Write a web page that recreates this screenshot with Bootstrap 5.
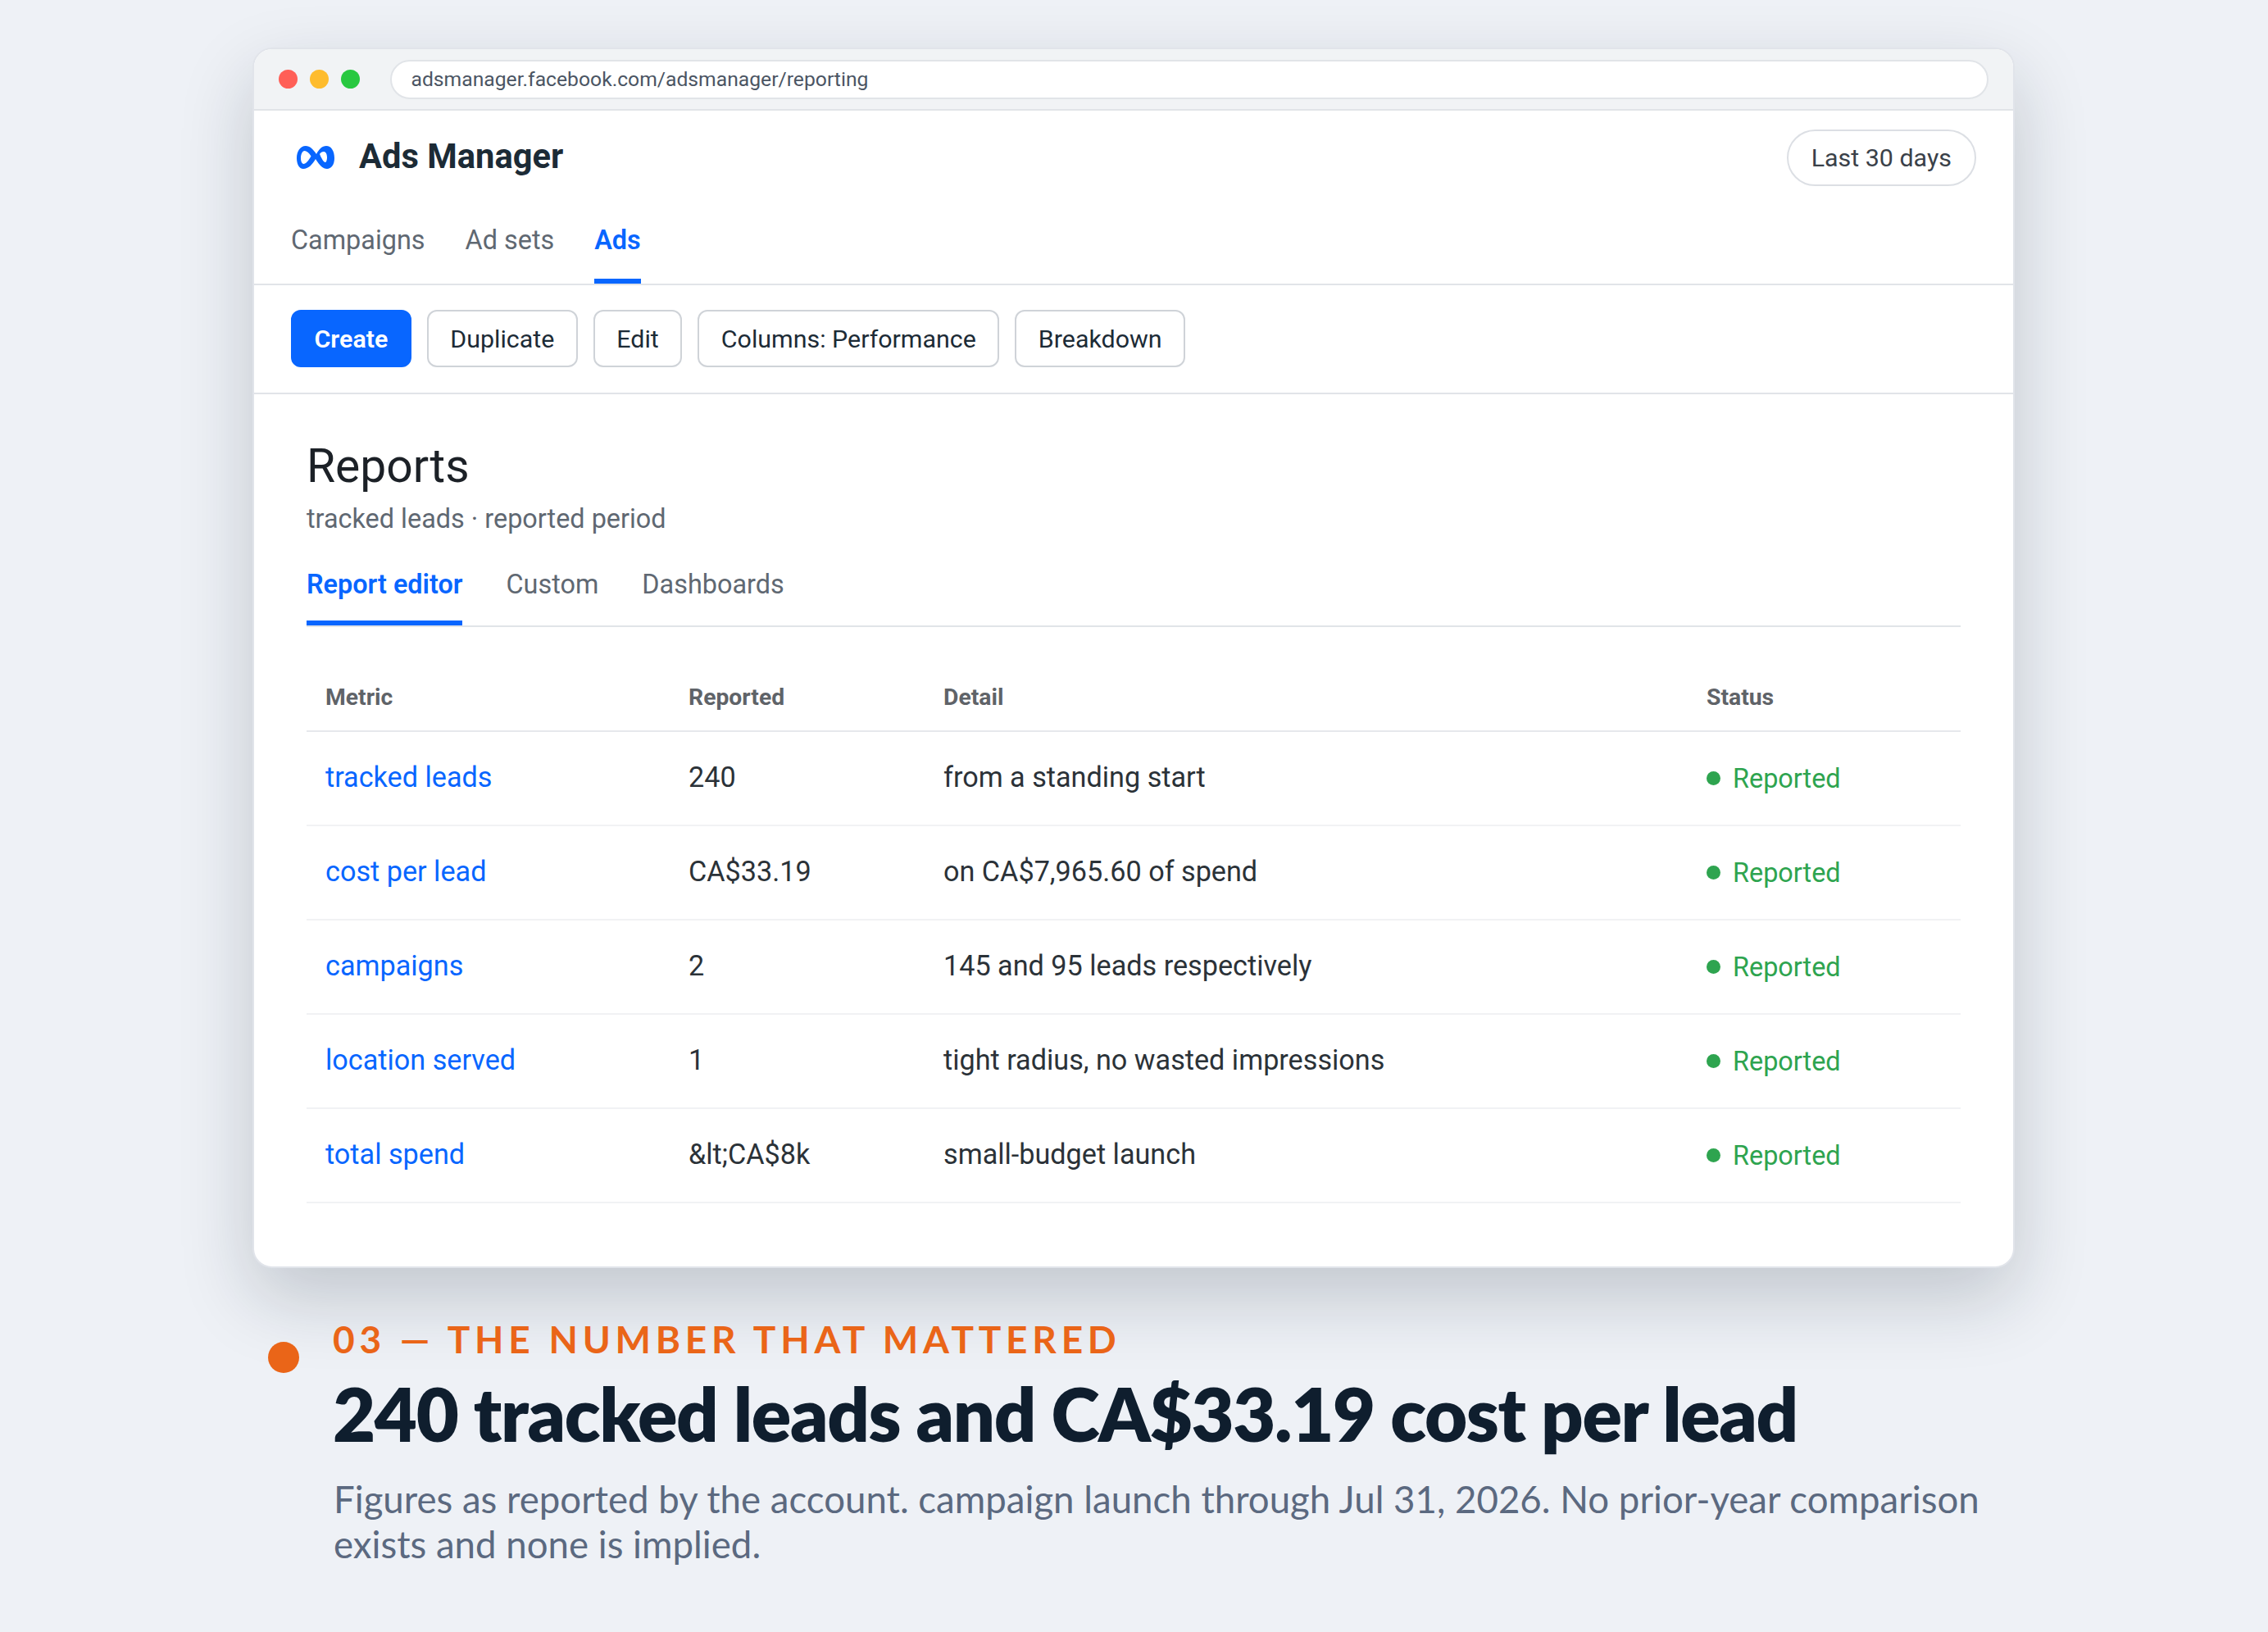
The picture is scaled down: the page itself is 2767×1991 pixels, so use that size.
<!DOCTYPE html>
<html>
<head>
  <title>Ads Manager - Reports</title>
  <link href="https://cdn.jsdelivr.net/npm/bootstrap@5.3.0/dist/css/bootstrap.min.css" rel="stylesheet">
  <style>
    body {
      background-color: #eef1f6;
      font-family: Roboto, "Liberation Sans", sans-serif;
      color: #1c2b36;
    }

    .page-wrap {
      width: 2150px;
      margin-left: 308px;
      padding-top: 58px;
    }

    .browser {
      border: 2px solid #e1e4ea;
      border-radius: 24px;
      background-color: #fff;
      overflow: hidden;
      box-shadow: 0 36px 90px rgba(15, 30, 46, .2);
    }

    .chrome-bar {
      height: 75px;
      background-color: #f1f3f5;
      border-bottom: 2px solid #e1e4e8;
      padding: 13px 30px 0 30px;
    }

    .light {
      width: 23px;
      height: 23px;
      border-radius: 50%;
    }

    .url-bar {
      height: 48px;
      margin-left: 37px;
      padding-left: 23.5px;
      border: 2px solid #e1e4e8;
      border-radius: 24px;
      background-color: #fff;
      color: #4b5563;
      font-size: 24.7px;
      line-height: 44px;
    }

    .top-head {
      padding: 23px 45px 0 45px;
    }

    .brand-name {
      font-size: 41.7px;
      font-weight: 700;
      color: #1c2b36;
      margin-left: 29px;
      position: relative;
      top: -1px;
    }

    .logo-mark {
      margin-left: 6px;
    }

    .date-pill {
      height: 69px;
      padding: 0 28px;
      border: 2px solid #dcdfe4;
      border-radius: 35px;
      font-size: 30.4px;
      line-height: 65px;
      color: #3a4149;
      background-color: #fff;
    }

    .main-tabs {
      padding: 42px 45px 0;
      gap: 49px;
      border-bottom: 2px solid #e1e4e8;
    }

    .main-tabs a,
    .sub-tabs a {
      display: block;
      text-decoration: none;
      color: #5f6872;
      font-size: 32.4px;
      line-height: 48px;
      padding-bottom: 23px;
      border-bottom: 6px solid transparent;
    }

    .main-tabs a.on,
    .sub-tabs a.on {
      color: #0866ff;
      font-weight: 600;
      border-bottom-color: #0866ff;
    }

    .tool-row {
      padding: 30px 45px 31px;
      gap: 19px;
      border-bottom: 2px solid #e1e4e8;
    }

    .tool-btn {
      height: 70px;
      padding: 2px 26.5px 0;
      font-size: 30.4px;
      line-height: 64px;
      border: 2px solid #cfd3d8;
      border-radius: 12px;
      color: #1c2b36;
      background-color: #fff;
    }

    .tool-btn.is-main {
      background-color: #0866ff;
      border-color: #0866ff;
      color: #fff;
      font-weight: 600;
    }

    .report-body {
      padding: 53px 64px 77px 64px;
    }

    .report-title {
      font-size: 57px;
      line-height: 70px;
      font-weight: 400;
      color: #1c2127;
      margin: 0;
    }

    .report-sub {
      font-size: 32.4px;
      line-height: 50px;
      color: #5f6872;
      margin: 4px 0 0;
    }

    .sub-tabs {
      margin-top: 31px;
      gap: 53px;
      border-bottom: 2px solid #e1e4e8;
    }

    .sub-tabs a {
      padding-bottom: 20px;
    }

    .report-table {
      margin: 0;
      table-layout: fixed;
      font-size: 34.2px;
      color: #2b3238;
    }

    .report-table th {
      height: 127px;
      padding: 46px 23px 0;
      font-size: 28.3px;
      font-weight: 700;
      color: #5f6368;
      border-bottom: 2px solid #e6e8ec;
      vertical-align: middle;
    }

    .report-table td {
      height: 115px;
      padding: 0 23px 2px;
      vertical-align: middle;
      border-bottom: 2px solid #f1f2f4;
      color: #2b3238;
    }

    .report-table td a {
      color: #0866ff;
      text-decoration: none;
    }

    .status-ok {
      color: #2ea44f;
      font-size: 32.4px;
      padding-top: 3px;
      gap: 15px;
    }

    .status-dot {
      width: 17px;
      height: 17px;
      border-radius: 50%;
      background-color: #2ea44f;
    }

    .caption {
      margin-top: 59px;
      font-family: Lato, "Liberation Sans", sans-serif;
    }

    .caption-dot {
      flex: none;
      width: 38px;
      height: 38px;
      margin: 31px 0 0 19px;
      border-radius: 50%;
      background-color: #ea6518;
    }

    .caption-text {
      margin-left: 41px;
      width: 2040px;
    }

    .eyebrow {
      font-size: 46px;
      line-height: 56px;
      font-weight: 700;
      letter-spacing: 5.75px;
      color: #ea6518;
    }

    .headline {
      font-size: 90px;
      line-height: 108px;
      font-weight: 800;
      letter-spacing: -1.38px;
      color: #0f1e2e;
      margin: 8px 0 0;
    }

    .caption-sub {
      font-size: 45.6px;
      line-height: 55px;
      color: #5b6980;
      margin: 23px 0 0;
      padding-left: 1px;
    }
  </style>
</head>
<body>
  <div class="page-wrap">
    <div class="browser">
      <div class="chrome-bar d-flex">
        <div class="d-flex align-items-center" style="height:46px;gap:15px">
          <span class="light" style="background:#ff5f57"></span>
          <span class="light" style="background:#febc2e"></span>
          <span class="light" style="background:#28c840"></span>
        </div>
        <div class="url-bar flex-grow-1">adsmanager.facebook.com/adsmanager/reporting</div>
      </div>

      <div class="top-head d-flex justify-content-between align-items-center">
        <div class="d-flex align-items-center">
          <svg class="logo-mark" width="48" height="30" viewBox="0 0 48 30" fill="#0866ff" fill-rule="evenodd">
            <path d="M12 1C17 1 21 5 25 11C28 5 32 1 37 1C43 1 47 7 47 16C47 24 43 29 38 29C33 29 29 25 24 17C20 24 15 29 9 29C4 29 1 23 1 16C1 8 5 1 12 1ZM10.500 7C8 7 6 11 6 16C6 20 7.500 23 9.500 23C12 23 15.500 19 18.500 13.500C16 9.500 13 7 10.500 7ZM29 11C30 9 32 8 34 8C36.500 8 38 11 38 15C38 18 37 21 36 21C34 21 31 16 29 11Z"/>
          </svg>
          <span class="brand-name">Ads Manager</span>
        </div>
        <div class="date-pill">Last 30 days</div>
      </div>

      <nav class="main-tabs d-flex">
        <a href="#">Campaigns</a>
        <a href="#">Ad sets</a>
        <a href="#" class="on">Ads</a>
      </nav>

      <div class="tool-row d-flex">
        <button class="btn tool-btn is-main">Create</button>
        <button class="btn tool-btn">Duplicate</button>
        <button class="btn tool-btn">Edit</button>
        <button class="btn tool-btn">Columns: Performance</button>
        <button class="btn tool-btn">Breakdown</button>
      </div>

      <div class="report-body">
        <h1 class="report-title">Reports</h1>
        <p class="report-sub">tracked leads · reported period</p>
        <nav class="sub-tabs d-flex">
          <a href="#" class="on">Report editor</a>
          <a href="#">Custom</a>
          <a href="#">Dashboards</a>
        </nav>
        <table class="table report-table">
          <colgroup>
            <col style="width:443px"><col style="width:311px"><col style="width:931px"><col>
          </colgroup>
          <thead>
            <tr><th>Metric</th><th>Reported</th><th>Detail</th><th>Status</th></tr>
          </thead>
          <tbody id="reportRows"></tbody>
        </table>
      </div>
    </div>

    <div class="caption d-flex">
      <span class="caption-dot"></span>
      <div class="caption-text">
        <div class="eyebrow">03 — THE NUMBER THAT MATTERED</div>
        <h2 class="headline">240 tracked leads and CA$33.19 cost per lead</h2>
        <p class="caption-sub">Figures as reported by the account. campaign launch through Jul 31, 2026. No prior-year comparison exists and none is implied.</p>
      </div>
    </div>
  </div>

  <script src="https://cdn.jsdelivr.net/npm/bootstrap@5.3.0/dist/js/bootstrap.bundle.min.js"></script>
  <script>
    const rows = [
      ['tracked leads', '240', 'from a standing start'],
      ['cost per lead', 'CA$33.19', 'on CA$7,965.60 of spend'],
      ['campaigns', '2', '145 and 95 leads respectively'],
      ['location served', '1', 'tight radius, no wasted impressions'],
      ['total spend', '&amp;lt;CA$8k', 'small-budget launch']
    ];
    document.getElementById('reportRows').innerHTML = rows.map(r => `
      <tr>
        <td><a href="#">${r[0]}</a></td>
        <td>${r[1]}</td>
        <td>${r[2]}</td>
        <td><span class="status-ok d-flex align-items-center"><span class="status-dot"></span>Reported</span></td>
      </tr>`).join('');
  </script>
</body>
</html>
